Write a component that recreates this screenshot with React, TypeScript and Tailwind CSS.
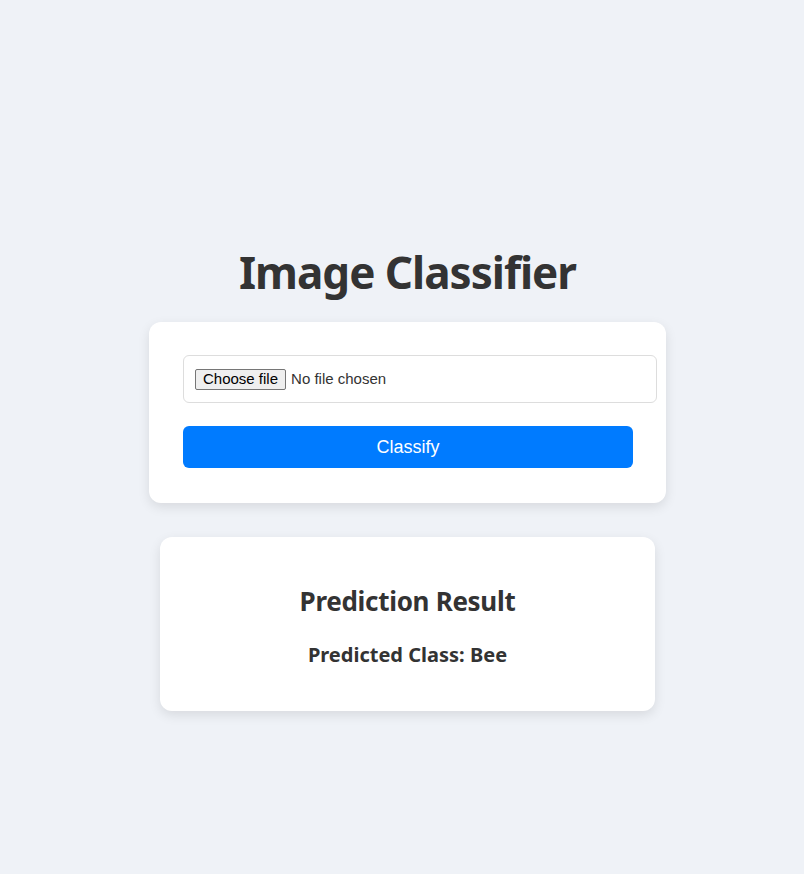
export default function App() {
  return (
    <div className="min-h-screen bg-[#eff2f7] flex flex-col items-center pt-[240px] pl-[11px] text-[#333] font-['Noto_Sans',sans-serif]">
      <h1 className="text-[44px] leading-[64px] font-bold tracking-[-1px]">Image Classifier</h1>

      <div className="mt-[18px] w-[517px] rounded-xl bg-white px-[34px] pt-[33px] pb-[35px] shadow-[0_4px_12px_rgba(0,0,0,0.1)]">
        <label className="flex items-center w-[474px] h-[48px] px-[11px] pt-[1px] rounded-md border border-[#ddd] bg-white font-['Liberation_Sans',Arial,sans-serif] text-[15px] cursor-pointer">
          <input type="file" className="hidden" />
          <span className="h-[21px] px-[7px] flex items-center border border-[#767676] rounded-[2px] bg-[#efefef] text-black">
            Choose file
          </span>
          <span className="ml-[5px] text-[#333]">No file chosen</span>
        </label>
        <button className="mt-[23px] block w-[450px] h-[42px] rounded-md bg-[#007bff] text-white text-[18px] font-['Liberation_Sans',Arial,sans-serif]">
          Classify
        </button>
      </div>

      <div className="mt-[34px] w-[495px] rounded-xl bg-white pt-[46px] pb-[42px] text-center shadow-[0_4px_12px_rgba(0,0,0,0.1)]">
        <h2 className="text-[26px] leading-[36px] font-bold tracking-[-0.3px]">Prediction Result</h2>
        <h3 className="mt-[22px] text-[20px] leading-[28px] font-bold">Predicted Class: Bee</h3>
      </div>
    </div>
  );
}
